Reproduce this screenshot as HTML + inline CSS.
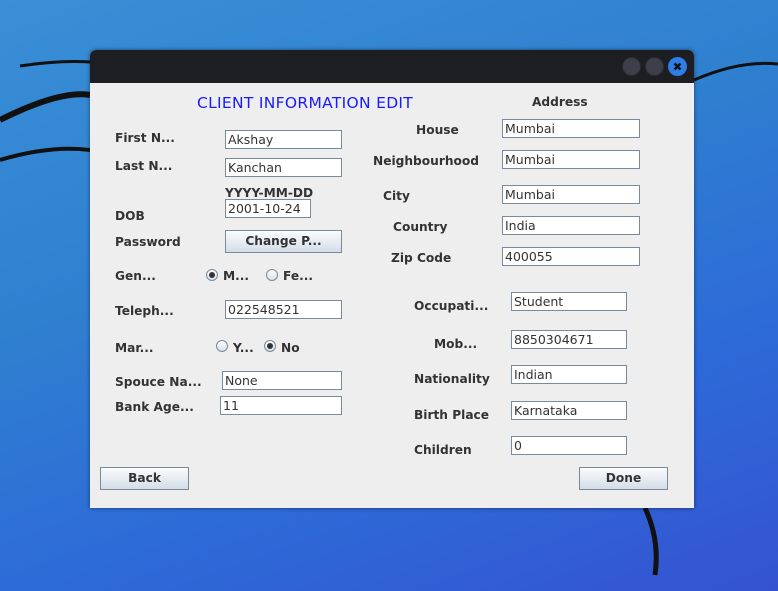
<!DOCTYPE html>
<html><head><style>
body{margin:0;width:778px;height:591px;overflow:hidden;position:relative;background:linear-gradient(160deg,#3a8fd6 0%,#2f7fd0 40%,#2d6ad8 70%,#3553d0 100%);font-family:"DejaVu Sans","Liberation Sans",sans-serif;}
.win{position:absolute;left:90px;top:50px;width:604px;height:458px;background:#eeeeee;border-radius:6px 6px 0 0;overflow:hidden;box-shadow:0 0 4px rgba(0,0,0,.5)}
.tb{position:absolute;left:0;top:0;width:604px;height:33px;background:#1c1e22}
.c{position:absolute;width:17px;height:17px;border-radius:50%;top:7px;background:#3d404a;border:1px solid #2a2c32}
.l{position:absolute;font-weight:bold;font-size:12.2px;color:#333;white-space:nowrap;line-height:16px}
.f{position:absolute;background:#fff;border:1px solid #7a8a9a;height:17px;font-size:12.5px;color:#333;line-height:17px;padding-left:2px;box-sizing:content-box}
.b{position:absolute;border:1px solid #7a8a9a;background:linear-gradient(#fbfcfd,#d3dde8);font-weight:bold;font-size:12.2px;color:#333;text-align:center;height:21px;line-height:21px}
.r{position:absolute;width:10px;height:10px;border-radius:50%;border:1px solid #7a8a9a;background:linear-gradient(#fff,#d8e0ea)}
.r.on::after{content:"";position:absolute;left:2px;top:2px;width:6px;height:6px;border-radius:50%;background:#333}
</style></head><body>
<svg style="position:absolute;left:0;top:0" width="778" height="591">
<path d="M0 120 Q60 90 90 95" stroke="#111" stroke-width="6" fill="none"/>
<path d="M20 66 Q60 60 90 62" stroke="#111" stroke-width="3" fill="none"/>
<path d="M0 160 Q50 145 90 150" stroke="#111" stroke-width="4" fill="none"/>
<path d="M694 80 Q740 60 778 64" stroke="#111" stroke-width="3" fill="none"/>
<path d="M645 508 Q660 540 655 575" stroke="#111" stroke-width="5" fill="none"/>
</svg>
<div class="win">
<div class="tb"></div>
<div class="c" style="left:532px"></div>
<div class="c" style="left:555px"></div>
<div class="c" style="left:578px;background:#2f7de6;border-color:#2f7de6"><svg width="17" height="17" style="position:absolute;left:0;top:0"><path d="M5.5 5.5L11.5 11.5M11.5 5.5L5.5 11.5" stroke="#111" stroke-width="2.4"/></svg></div>
</div>
<div style="position:absolute;left:197px;top:94px;font-size:15.5px;color:#1a1aff;line-height:18px;font-family:'DejaVu Sans',sans-serif;letter-spacing:0.3px">CLIENT INFORMATION EDIT</div>
<div class="l" style="left:532px;top:94px">Address</div>
<div class="l" style="left:115px;top:130px">First N...</div>
<div class="l" style="left:115px;top:158px">Last N...</div>
<div class="l" style="left:225px;top:185px">YYYY-MM-DD</div>
<div class="l" style="left:115px;top:208px">DOB</div>
<div class="l" style="left:115px;top:234px">Password</div>
<div class="l" style="left:115px;top:268px">Gen...</div>
<div class="l" style="left:115px;top:303px">Teleph...</div>
<div class="l" style="left:115px;top:340px">Mar...</div>
<div class="l" style="left:115px;top:374px">Spouce Na...</div>
<div class="l" style="left:115px;top:399px">Bank Age...</div>
<div class="f" style="left:225px;top:130px;width:113px">Akshay</div>
<div class="f" style="left:225px;top:158px;width:113px">Kanchan</div>
<div class="f" style="left:225px;top:199px;width:82px">2001-10-24</div>
<div class="b" style="left:225px;top:230px;width:115px">Change P...</div>
<div class="r on" style="left:206px;top:269px"></div><div class="l" style="left:223px;top:268px">M...</div>
<div class="r" style="left:266px;top:269px"></div><div class="l" style="left:283px;top:268px">Fe...</div>
<div class="f" style="left:225px;top:300px;width:113px">022548521</div>
<div class="r" style="left:216px;top:340px"></div><div class="l" style="left:233px;top:340px">Y...</div>
<div class="r on" style="left:264px;top:340px"></div><div class="l" style="left:281px;top:340px">No</div>
<div class="f" style="left:222px;top:371px;width:116px">None</div>
<div class="f" style="left:220px;top:396px;width:118px">11</div>
<div class="l" style="left:416px;top:122px">House</div>
<div class="l" style="left:373px;top:153px">Neighbourhood</div>
<div class="l" style="left:383px;top:188px">City</div>
<div class="l" style="left:393px;top:219px">Country</div>
<div class="l" style="left:391px;top:250px">Zip Code</div>
<div class="f" style="left:502px;top:119px;width:134px">Mumbai</div>
<div class="f" style="left:502px;top:150px;width:134px">Mumbai</div>
<div class="f" style="left:502px;top:185px;width:134px">Mumbai</div>
<div class="f" style="left:502px;top:216px;width:134px">India</div>
<div class="f" style="left:502px;top:247px;width:134px">400055</div>
<div class="l" style="left:414px;top:298px">Occupati...</div>
<div class="l" style="left:434px;top:336px">Mob...</div>
<div class="l" style="left:414px;top:371px">Nationality</div>
<div class="l" style="left:414px;top:407px">Birth Place</div>
<div class="l" style="left:414px;top:442px">Children</div>
<div class="f" style="left:511px;top:292px;width:112px">Student</div>
<div class="f" style="left:511px;top:330px;width:112px">8850304671</div>
<div class="f" style="left:511px;top:365px;width:112px">Indian</div>
<div class="f" style="left:511px;top:401px;width:112px">Karnataka</div>
<div class="f" style="left:511px;top:436px;width:112px">0</div>
<div class="b" style="left:100px;top:467px;width:87px">Back</div>
<div class="b" style="left:579px;top:467px;width:87px">Done</div>
</body></html>
